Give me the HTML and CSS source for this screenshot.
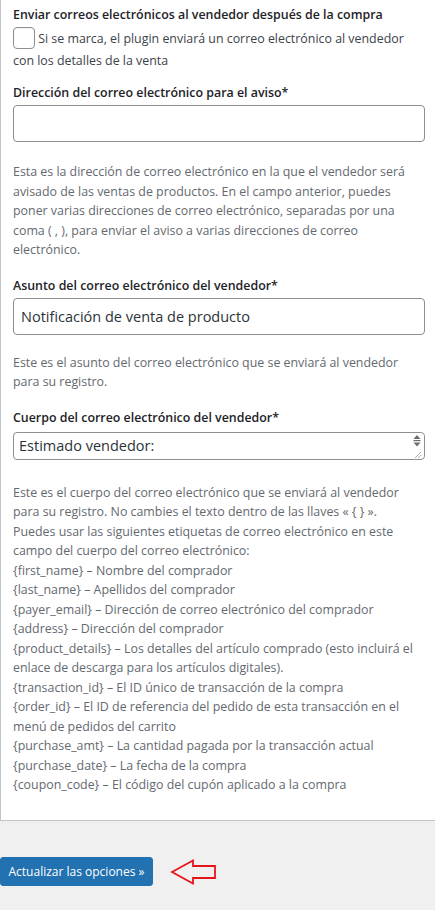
FILE: index.html
```html
<!DOCTYPE html>
<html lang="es">
<head>
<meta charset="utf-8">
<link rel="stylesheet" href="styles.css">
</head>
<body>
<div class="panel">
  <div class="field first">
    <div class="label">Enviar correos electrónicos al vendedor después de la compra</div>
    <div class="check-text"><span class="checkbox"></span> Si se marca, el plugin enviará un correo electrónico al vendedor con los detalles de la venta</div>
  </div>

  <div class="field f-email">
    <div class="label">Dirección del correo electrónico para el aviso*</div>
    <div class="input"></div>
    <p class="desc">Esta es la dirección de correo electrónico en la que el vendedor será avisado de las ventas de productos. En el campo anterior, puedes poner varias direcciones de correo electrónico, separadas por una coma ( , ), para enviar el aviso a varias direcciones de correo electrónico.</p>
  </div>

  <div class="field f-subject">
    <div class="label">Asunto del correo electrónico del vendedor*</div>
    <div class="input">Notificación de venta de producto</div>
    <p class="desc d-subject">Este es el asunto del correo electrónico que se enviará al vendedor para su registro.</p>
  </div>

  <div class="field f-body">
    <div class="label">Cuerpo del correo electrónico del vendedor*</div>
    <div class="textarea">Estimado vendedor:
      <svg class="scroll" width="10" height="25" viewBox="0 0 10 25">
        <path d="M1.5 6 L5 2 L8.5 6 Z" fill="#6e6e6e"/>
        <rect x="1.5" y="7" width="7" height="1.2" fill="#6e6e6e"/>
        <path d="M1.5 9.5 L8.5 9.5 L5 13.5 Z" fill="#6e6e6e"/>
        <path d="M9 19 L3 25 M9 22 L6 25" stroke="#9a9a9a" stroke-width="0.8"/>
      </svg>
    </div>
    <p class="desc d-body">Este es el cuerpo del correo electrónico que se enviará al vendedor para su registro. No cambies el texto dentro de las llaves « { } ».<br>Puedes usar las siguientes etiquetas de correo electrónico en este campo del cuerpo del correo electrónico:<br>{first_name} – Nombre del comprador<br>{last_name} – Apellidos del comprador<br>{payer_email} – Dirección de correo electrónico del comprador<br>{address} – Dirección del comprador<br>{product_details} – Los detalles del artículo comprado (esto incluirá el enlace de descarga para los artículos digitales).<br>{transaction_id} – El ID único de transacción de la compra<br>{order_id} – El ID de referencia del pedido de esta transacción en el menú de pedidos del carrito<br>{purchase_amt} – La cantidad pagada por la transacción actual<br>{purchase_date} – La fecha de la compra<br>{coupon_code} – El código del cupón aplicado a la compra</p>
  </div>
</div>

<div class="actions">
  <button class="btn" type="button">Actualizar las opciones »</button>
  <svg class="arrow" width="48" height="28" viewBox="0 0 48 28">
    <path d="M2 14 L23 2.5 L23 8 L45 8 L45 20 L23 20 L23 25.5 Z" fill="none" stroke="#e8141c" stroke-width="1.8" stroke-linejoin="miter"/>
  </svg>
</div>
</body>
</html>
```
FILE: styles.css
```css
html, body {
  margin: 0;
  padding: 0;
}
body {
  background: #f0f0f1;
  font-family: "Open Sans", "Noto Sans", sans-serif;
  font-size: 12.4px;
  color: #3c434a;
  width: 435px;
  height: 910px;
  overflow: hidden;
}
.panel {
  box-sizing: border-box;
  background: #fff;
  border-left: 1px solid #c3c4c7;
  border-bottom: 1px solid #c3c4c7;
  padding: 5px 10px 18px 12px;
  height: 821px;
}
.field.f-email {
  margin-top: 11px;
}
.field.f-subject {
  margin-top: 16px;
}
.field.f-body {
  margin-top: 16px;
}
.label {
  font-weight: 600;
  color: #1d2327;
  line-height: 19px;
  margin-bottom: 3px;
}
.f-body .label {
  margin-bottom: 5px;
}
.check-text {
  line-height: 22px;
}
.checkbox {
  display: inline-block;
  width: 22px;
  height: 22px;
  border: 1px solid #8c8f94;
  border-radius: 4px;
  vertical-align: -6px;
  box-sizing: border-box;
  box-shadow: inset 0 1px 2px rgba(0,0,0,0.05);
}
.input {
  box-sizing: border-box;
  width: 412px;
  height: 37px;
  border: 1px solid #8c8f94;
  border-radius: 4px;
  padding: 0 7px;
  font-size: 14.5px;
  line-height: 35px;
  color: #2c3338;
}
.textarea {
  position: relative;
  box-sizing: border-box;
  width: 412px;
  height: 28px;
  border: 1px solid #8c8f94;
  border-radius: 4px;
  padding: 0 5px;
  font-size: 14.5px;
  line-height: 26px;
  color: #2c3338;
}
.scroll {
  position: absolute;
  right: 2px;
  top: 0;
}
.desc {
  margin: 20px 0 0;
  color: #646970;
  line-height: 19.5px;
}
.desc.d-subject {
  margin-top: 18px;
}
.desc.d-body {
  margin-top: 23px;
}
.actions {
  display: flex;
  align-items: center;
  gap: 17px;
  margin-top: 36px;
}
.btn {
  font-family: "Open Sans", "Noto Sans", sans-serif;
  font-size: 12px;
  color: #fff;
  background: #2271b1;
  border: 1px solid #2271b1;
  border-radius: 3px;
  height: 29px;
  width: 153px;
  padding: 0;
  text-align: center;
}
.arrow {
  display: block;
}
```
